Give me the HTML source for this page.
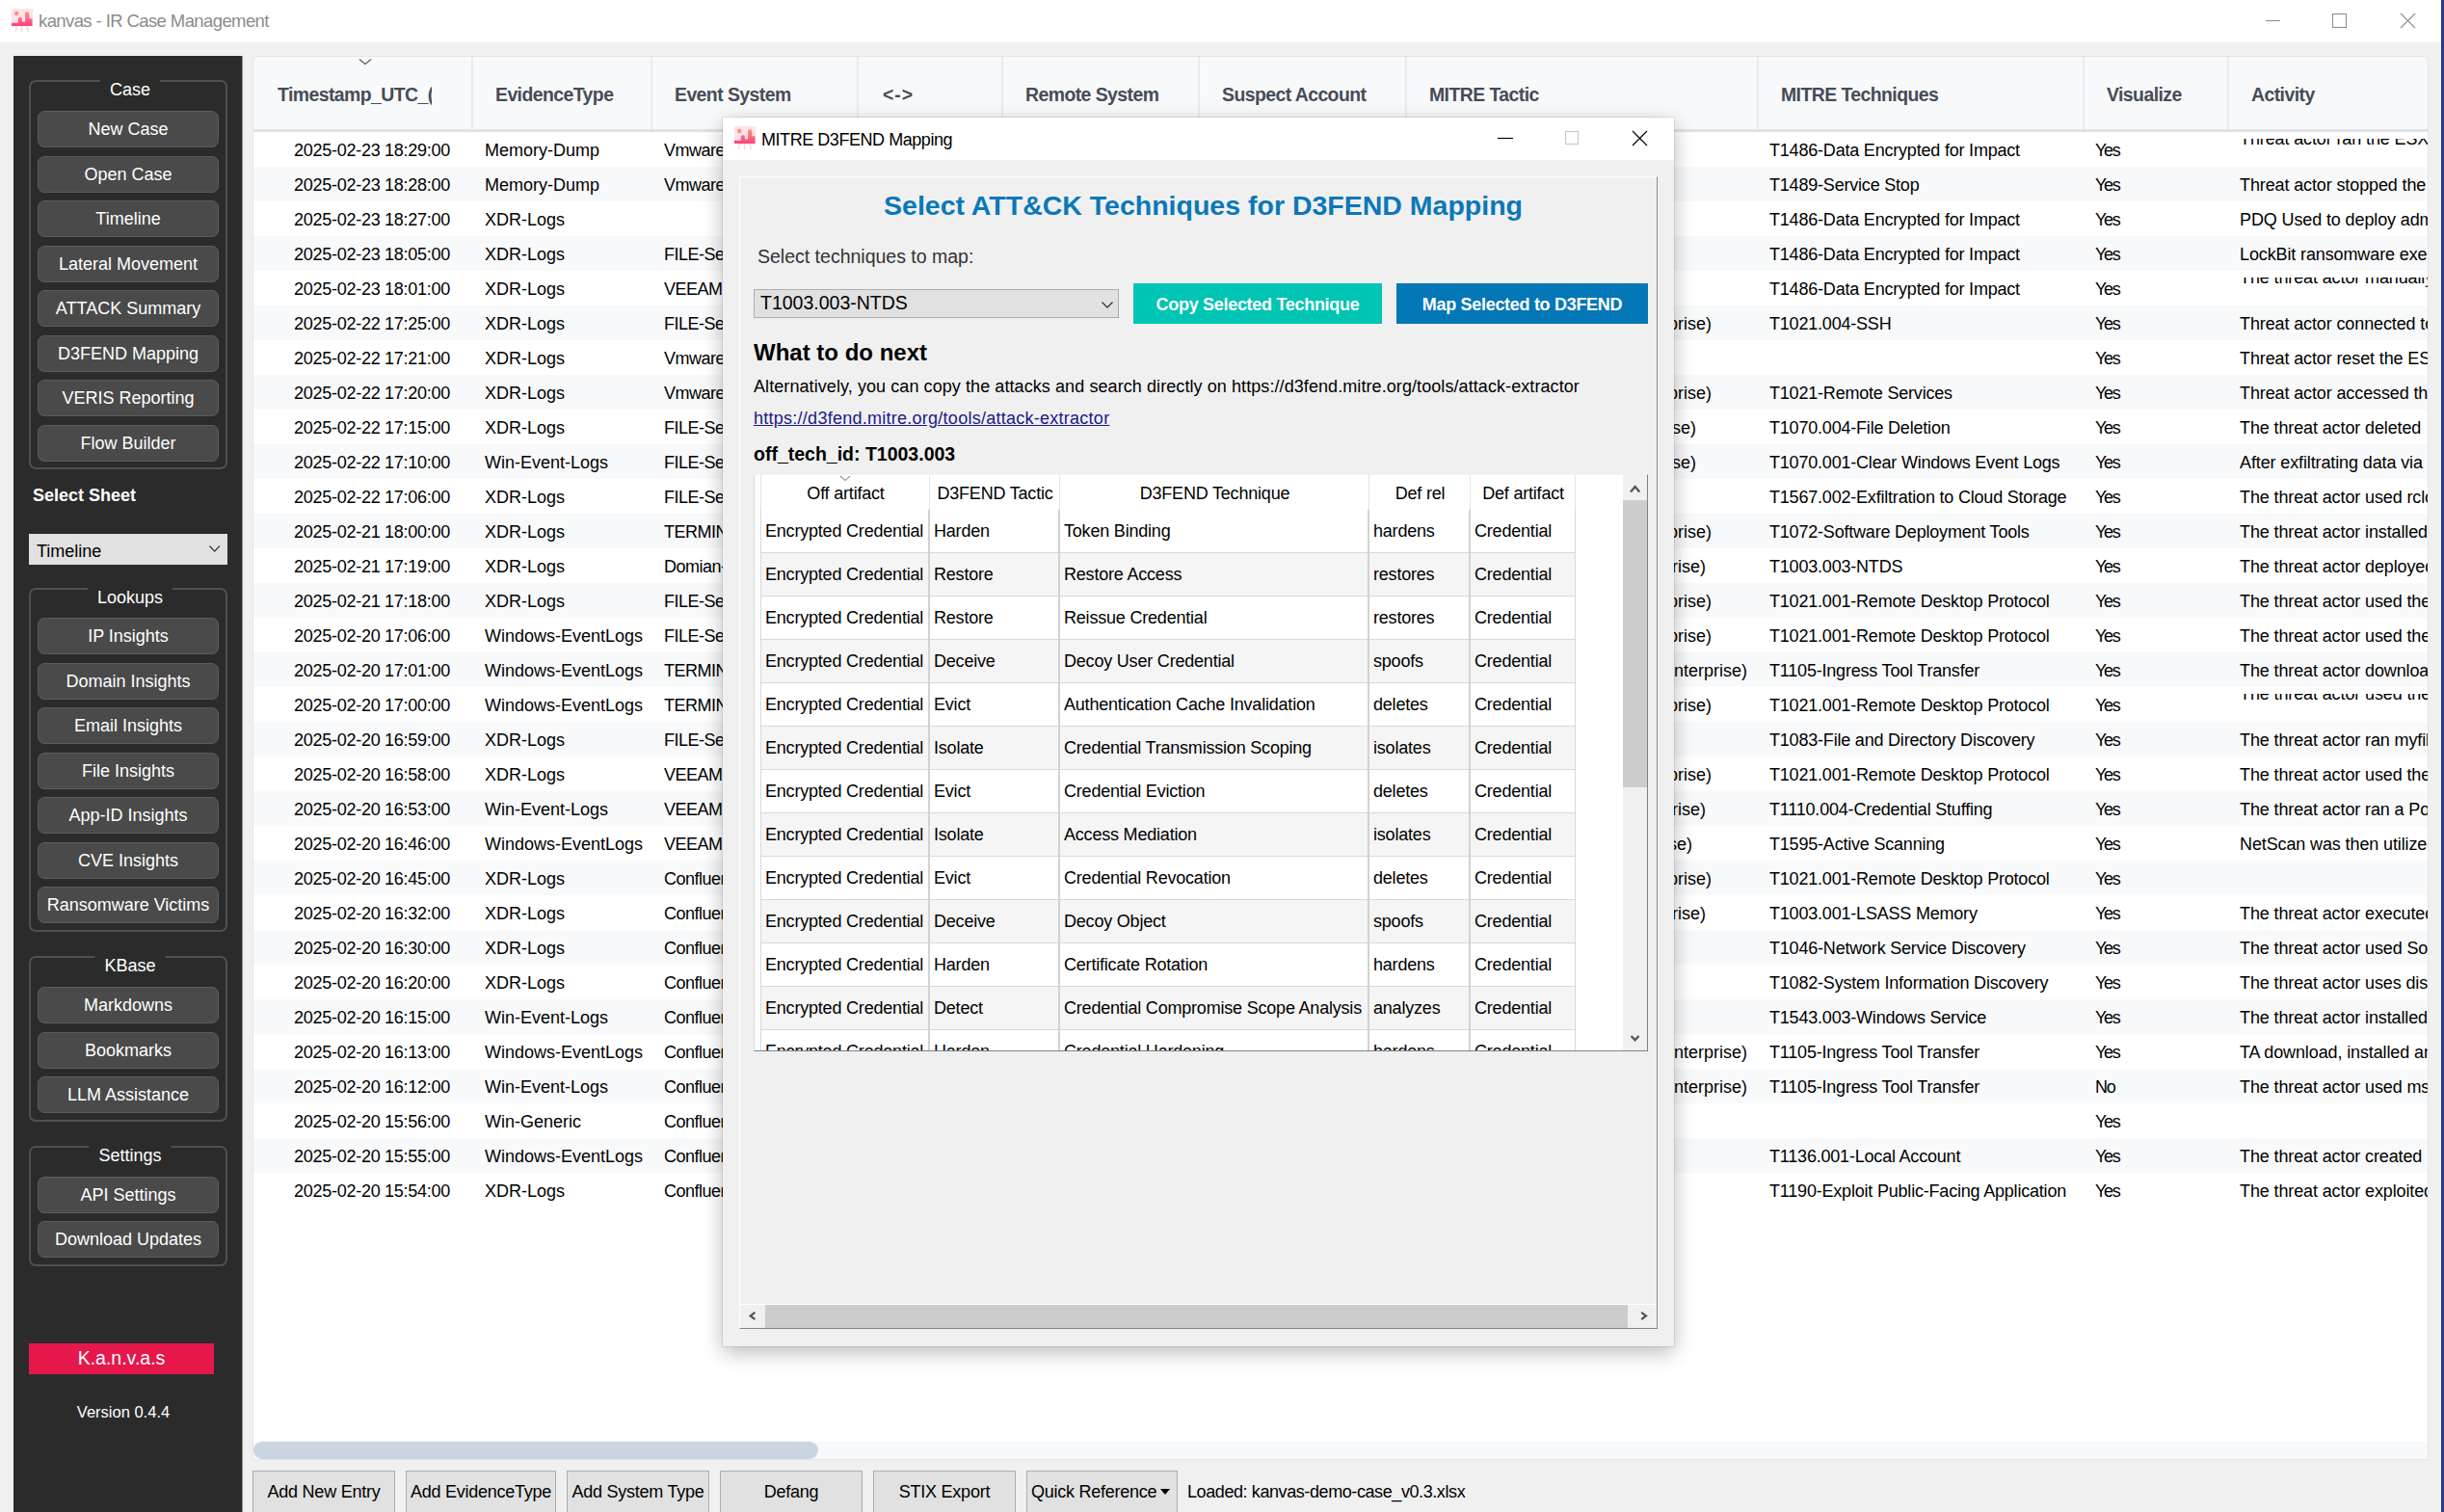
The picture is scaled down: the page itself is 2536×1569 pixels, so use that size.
<!DOCTYPE html><html><head><meta charset="utf-8"><title>kanvas - IR Case Management</title><style>

*{box-sizing:border-box;margin:0;padding:0}
html,body{width:2536px;height:1569px;overflow:hidden;background:#f0f0f0}
body{position:relative;font-family:"Liberation Sans",sans-serif;color:#000}
.abs,.ico{position:absolute}
.t{position:absolute;white-space:nowrap;line-height:1}
#titlebar{left:0;top:0;width:2533px;height:44px;background:#fff}
#ttl{left:40px;top:13.4px;font-size:18.5px;color:#8c8c8c;letter-spacing:-0.6px}
#edge{left:2533px;top:0;width:3px;height:1569px;background:#2b3990}
#side{left:14px;top:58px;width:238px;height:1511px;background:#2b2b2b;box-shadow:inset -1px 0 0 #8b8b8b}
.grp{position:absolute;left:16px;width:206px;border:2px solid #505050;border-radius:7px}
.gt{position:absolute;left:50%;transform:translateX(-50%);margin-left:2px;top:-2px;background:#2b2b2b;color:#fff;font-size:18px;line-height:20px;height:12px;padding:0 10px;white-space:nowrap}
.sb{position:absolute;left:25px;width:188px;height:38px;background:#4a4a4a;border:1px solid #5c5c5c;border-radius:7px;color:#fff;font-size:18px;line-height:37.5px;text-align:center;white-space:nowrap}
#tbl{left:263px;top:59px;width:2256px;height:1455px;background:#fff;border-radius:6px 6px 0 0;overflow:hidden;box-shadow:0 0 0 1px #e2e6eb}
#thead{left:0;top:0;width:2256px;height:78px;background:#f8f9fa;border-bottom:3px solid #dee2e6}
.vs{position:absolute;top:0;width:2px;height:75px;background:#e9ecef}
.th{position:absolute;top:28px;font-size:19.4px;font-weight:bold;color:#454c58;white-space:nowrap;line-height:22px;letter-spacing:-0.55px}
.r{position:absolute;left:0;width:2256px;height:36px}
.r.o{background:#f8f9fa}
.c{position:absolute;top:0;height:36px;line-height:38px;font-size:18px;white-space:nowrap;color:#000}
.c.ts{left:42px;letter-spacing:-0.27px}
.c.ev{left:240px}
.c.es{left:426px;letter-spacing:-0.5px}
.c.mt{left:1195px;display:flex;justify-content:flex-end;overflow:visible}
.c.te{left:1573px;letter-spacing:-0.2px}
.c.vz{left:1911px;letter-spacing:-1.3px}
.c.ac{left:2061px;width:195px;overflow:hidden;letter-spacing:-0.12px}
.c.ac2{left:2061px;width:195px;overflow:hidden;top:6.5px;height:29.5px;letter-spacing:-0.12px}
.c.ac2 span{position:absolute;left:0;top:-17.5px;line-height:36px}
.bb{position:absolute;top:1526px;height:50px;background:#e1e1e1;border:1px solid #adadad;letter-spacing:-0.25px;font-size:18px;text-align:center;line-height:42px;white-space:nowrap}
#dlg{left:750px;top:122px;width:987px;height:1275px;background:#f0f0f0;box-shadow:0 0 0 1px rgba(0,0,0,.07),0 6px 20px rgba(0,0,0,.28)}
#dtb{left:0;top:0;width:987px;height:44px;background:#fff}
#frame{left:17px;top:61px;width:953px;height:1196px;border:1px solid;border-color:#fff #868c96 #7c8490 #fff}
.dt{position:absolute;font-size:18px;letter-spacing:-0.2px;line-height:45px;white-space:nowrap;height:45px;top:0}
.dr{position:absolute;left:7px;width:845px;height:45px;border-bottom:1px solid #d9d9d9}
.dr.o{background:#f5f5f5}
.dv{position:absolute;top:0;width:2px;background:#d4d4d4}

</style></head><body>
<div class="abs" id="titlebar"></div>
<svg class="ico" style="left:12px;top:9px" width="22" height="24" viewBox="0 0 22 24"><defs><linearGradient id="g1" x1="0" y1="0" x2="0" y2="1"><stop offset="0" stop-color="#ff8f7c"/><stop offset="0.55" stop-color="#ff6585"/><stop offset="1" stop-color="#ff3d80"/></linearGradient></defs><rect x="0" y="0" width="22" height="18" fill="#ffe2e7"/><path d="M0 18.100V14.700H6.700V11a2.100 2.100 0 0 1 4.200 0V13.400H14.100V5.300a2.100 2.100 0 0 1 4.200 0V10.200H21.500V18.100z" fill="url(#g1)"/><circle cx="5.200" cy="5" r="2.200" fill="#ff8c7c"/><path d="M5.600 18.100L4.200 24M10.600 18.100V24M15.600 18.100L17.800 24" stroke="#ffd3dc" stroke-width="1.500" fill="none"/></svg>
<div class="t" id="ttl">kanvas - IR Case Management</div>
<svg class="abs" style="left:2340px;top:0" width="192" height="44" viewBox="0 0 192 44"><g stroke="#8e8e8e" stroke-width="1.1" fill="none"><path d="M11 21.5h15"/><rect x="80.5" y="14.5" width="14" height="14"/><path d="M151 14l15 15M166 14l-15 15"/></g></svg>
<div class="abs" id="edge"></div>
<div class="abs" id="side">
<div class="grp" style="top:25px;height:404px"><div class="gt">Case</div></div>
<div class="sb" style="top:57.0px">New Case</div>
<div class="sb" style="top:103.5px">Open Case</div>
<div class="sb" style="top:150.0px">Timeline</div>
<div class="sb" style="top:196.5px">Lateral Movement</div>
<div class="sb" style="top:243.0px">ATTACK Summary</div>
<div class="sb" style="top:289.5px">D3FEND Mapping</div>
<div class="sb" style="top:336.0px">VERIS Reporting</div>
<div class="sb" style="top:382.5px">Flow Builder</div>
<div class="t" style="left:20px;top:447px;font-size:18px;font-weight:bold;color:#fff">Select Sheet</div>
<div class="abs" style="left:16px;top:496px;width:206px;height:32px;background:#e1e1e1;border:1px solid #e1e1e1"><div class="t" style="left:7px;top:7.5px;font-size:18px">Timeline</div><svg class="abs" style="left:184.500px;top:10.300px" width="14" height="10" viewBox="0 0 14 10"><path d="M1.5 1.5l5.200 5.600 5.200-5.600" stroke="#333" stroke-width="1.2" fill="none"/></svg></div>
<div class="grp" style="top:552px;height:357px"><div class="gt">Lookups</div></div>
<div class="sb" style="top:583.0px">IP Insights</div>
<div class="sb" style="top:629.5px">Domain Insights</div>
<div class="sb" style="top:676.0px">Email Insights</div>
<div class="sb" style="top:722.5px">File Insights</div>
<div class="sb" style="top:769.0px">App-ID Insights</div>
<div class="sb" style="top:815.5px">CVE Insights</div>
<div class="sb" style="top:862.0px">Ransomware Victims</div>
<div class="grp" style="top:934px;height:172px"><div class="gt">KBase</div></div>
<div class="sb" style="top:966.0px">Markdowns</div>
<div class="sb" style="top:1012.5px">Bookmarks</div>
<div class="sb" style="top:1059.0px">LLM Assistance</div>
<div class="grp" style="top:1131px;height:125px"><div class="gt">Settings</div></div>
<div class="sb" style="top:1162.5px">API Settings</div>
<div class="sb" style="top:1209.0px">Download Updates</div>
<div class="abs" style="left:16px;top:1336px;width:192px;height:32px;background:#e6174b;color:#fff;font-size:19.5px;line-height:30px;text-align:center">K.a.n.v.a.s</div>
<div class="t" style="left:0;width:228px;text-align:center;top:1399px;font-size:16.5px;color:#fff">Version 0.4.4</div>
</div>
<div class="abs" id="tbl">
<div class="abs" id="thead">
<div class="th" style="left:25px;width:160px;overflow:hidden">Timestamp_UTC_(</div>
<div class="vs" style="left:226px"></div>
<div class="th" style="left:251px">EvidenceType</div>
<div class="vs" style="left:412px"></div>
<div class="th" style="left:437px">Event System</div>
<div class="vs" style="left:626px"></div>
<div class="th" style="left:651px;letter-spacing:1px;margin-left:2px">&lt;-&gt;</div>
<div class="vs" style="left:776px"></div>
<div class="th" style="left:801px">Remote System</div>
<div class="vs" style="left:980px"></div>
<div class="th" style="left:1005px">Suspect Account</div>
<div class="vs" style="left:1195px"></div>
<div class="th" style="left:1220px">MITRE Tactic</div>
<div class="vs" style="left:1560px"></div>
<div class="th" style="left:1585px">MITRE Techniques</div>
<div class="vs" style="left:1898px"></div>
<div class="th" style="left:1923px">Visualize</div>
<div class="vs" style="left:2048px"></div>
<div class="th" style="left:2073px">Activity</div>
<svg class="abs" style="left:108px;top:1px" width="16" height="9" viewBox="0 0 16 9"><path d="M2 1.5l6 5 6-5" stroke="#555" stroke-width="1.1" fill="none"/></svg>
</div>
<div class="r" style="top:78px">
<div class="c ts">2025-02-23 18:29:00</div><div class="c ev">Memory-Dump</div>
<div class="c es">Vmware-ESXi</div>
<div class="c te">T1486-Data Encrypted for Impact</div>
<div class="c vz">Yes</div>
<div class="c ac2"><span>Threat actor ran the ESXi encryptor</span></div>
</div>
<div class="r o" style="top:114px">
<div class="c ts">2025-02-23 18:28:00</div><div class="c ev">Memory-Dump</div>
<div class="c es">Vmware-ESXi</div>
<div class="c te">T1489-Service Stop</div>
<div class="c vz">Yes</div>
<div class="c ac">Threat actor stopped the</div>
</div>
<div class="r" style="top:150px">
<div class="c ts">2025-02-23 18:27:00</div><div class="c ev">XDR-Logs</div>
<div class="c te">T1486-Data Encrypted for Impact</div>
<div class="c vz">Yes</div>
<div class="c ac">PDQ Used to deploy admin tools</div>
</div>
<div class="r o" style="top:186px">
<div class="c ts">2025-02-23 18:05:00</div><div class="c ev">XDR-Logs</div>
<div class="c es">FILE-Server</div>
<div class="c te">T1486-Data Encrypted for Impact</div>
<div class="c vz">Yes</div>
<div class="c ac">LockBit ransomware executed</div>
</div>
<div class="r" style="top:222px">
<div class="c ts">2025-02-23 18:01:00</div><div class="c ev">XDR-Logs</div>
<div class="c es">VEEAM-Server</div>
<div class="c te">T1486-Data Encrypted for Impact</div>
<div class="c vz">Yes</div>
<div class="c ac2"><span>The threat actor manually executed</span></div>
</div>
<div class="r o" style="top:258px">
<div class="c ts">2025-02-22 17:25:00</div><div class="c ev">XDR-Logs</div>
<div class="c es">FILE-Server</div>
<div class="c mt" style="width:318px"><span>Lateral Movement (Enterprise)</span></div>
<div class="c te">T1021.004-SSH</div>
<div class="c vz">Yes</div>
<div class="c ac">Threat actor connected to ESXi</div>
</div>
<div class="r" style="top:294px">
<div class="c ts">2025-02-22 17:21:00</div><div class="c ev">XDR-Logs</div>
<div class="c es">Vmware-ESXi</div>
<div class="c vz">Yes</div>
<div class="c ac">Threat actor reset the ESXi root password</div>
</div>
<div class="r o" style="top:330px">
<div class="c ts">2025-02-22 17:20:00</div><div class="c ev">XDR-Logs</div>
<div class="c es">Vmware-ESXi</div>
<div class="c mt" style="width:318px"><span>Lateral Movement (Enterprise)</span></div>
<div class="c te">T1021-Remote Services</div>
<div class="c vz">Yes</div>
<div class="c ac">Threat actor accessed the ESXi</div>
</div>
<div class="r" style="top:366px">
<div class="c ts">2025-02-22 17:15:00</div><div class="c ev">XDR-Logs</div>
<div class="c es">FILE-Server</div>
<div class="c mt" style="width:302px"><span>Defense Evasion (Enterprise)</span></div>
<div class="c te">T1070.004-File Deletion</div>
<div class="c vz">Yes</div>
<div class="c ac">The threat actor deleted</div>
</div>
<div class="r o" style="top:402px">
<div class="c ts">2025-02-22 17:10:00</div><div class="c ev">Win-Event-Logs</div>
<div class="c es">FILE-Server</div>
<div class="c mt" style="width:302px"><span>Defense Evasion (Enterprise)</span></div>
<div class="c te">T1070.001-Clear Windows Event Logs</div>
<div class="c vz">Yes</div>
<div class="c ac">After exfiltrating data via</div>
</div>
<div class="r" style="top:438px">
<div class="c ts">2025-02-22 17:06:00</div><div class="c ev">XDR-Logs</div>
<div class="c es">FILE-Server</div>
<div class="c te">T1567.002-Exfiltration to Cloud Storage</div>
<div class="c vz">Yes</div>
<div class="c ac">The threat actor used rclone</div>
</div>
<div class="r o" style="top:474px">
<div class="c ts">2025-02-21 18:00:00</div><div class="c ev">XDR-Logs</div>
<div class="c es">TERMINAL-Server</div>
<div class="c mt" style="width:318px"><span>Lateral Movement (Enterprise)</span></div>
<div class="c te">T1072-Software Deployment Tools</div>
<div class="c vz">Yes</div>
<div class="c ac">The threat actor installed PDQ</div>
</div>
<div class="r" style="top:510px">
<div class="c ts">2025-02-21 17:19:00</div><div class="c ev">XDR-Logs</div>
<div class="c es">Domian-Controller</div>
<div class="c mt" style="width:312px"><span>Credential Access (Enterprise)</span></div>
<div class="c te">T1003.003-NTDS</div>
<div class="c vz">Yes</div>
<div class="c ac">The threat actor deployed ntdsutil</div>
</div>
<div class="r o" style="top:546px">
<div class="c ts">2025-02-21 17:18:00</div><div class="c ev">XDR-Logs</div>
<div class="c es">FILE-Server</div>
<div class="c mt" style="width:318px"><span>Lateral Movement (Enterprise)</span></div>
<div class="c te">T1021.001-Remote Desktop Protocol</div>
<div class="c vz">Yes</div>
<div class="c ac">The threat actor used the RDP</div>
</div>
<div class="r" style="top:582px">
<div class="c ts">2025-02-20 17:06:00</div><div class="c ev">Windows-EventLogs</div>
<div class="c es">FILE-Server</div>
<div class="c mt" style="width:318px"><span>Lateral Movement (Enterprise)</span></div>
<div class="c te">T1021.001-Remote Desktop Protocol</div>
<div class="c vz">Yes</div>
<div class="c ac">The threat actor used the RDP</div>
</div>
<div class="r o" style="top:618px">
<div class="c ts">2025-02-20 17:01:00</div><div class="c ev">Windows-EventLogs</div>
<div class="c es">TERMINAL-Server</div>
<div class="c mt" style="width:355px"><span>Command and Control (Enterprise)</span></div>
<div class="c te">T1105-Ingress Tool Transfer</div>
<div class="c vz">Yes</div>
<div class="c ac">The threat actor downloaded tools</div>
</div>
<div class="r" style="top:654px">
<div class="c ts">2025-02-20 17:00:00</div><div class="c ev">Windows-EventLogs</div>
<div class="c es">TERMINAL-Server</div>
<div class="c mt" style="width:318px"><span>Lateral Movement (Enterprise)</span></div>
<div class="c te">T1021.001-Remote Desktop Protocol</div>
<div class="c vz">Yes</div>
<div class="c ac2"><span>The threat actor used the RDP</span></div>
</div>
<div class="r o" style="top:690px">
<div class="c ts">2025-02-20 16:59:00</div><div class="c ev">XDR-Logs</div>
<div class="c es">FILE-Server</div>
<div class="c te">T1083-File and Directory Discovery</div>
<div class="c vz">Yes</div>
<div class="c ac">The threat actor ran myfiles</div>
</div>
<div class="r" style="top:726px">
<div class="c ts">2025-02-20 16:58:00</div><div class="c ev">XDR-Logs</div>
<div class="c es">VEEAM-Server</div>
<div class="c mt" style="width:318px"><span>Lateral Movement (Enterprise)</span></div>
<div class="c te">T1021.001-Remote Desktop Protocol</div>
<div class="c vz">Yes</div>
<div class="c ac">The threat actor used the RDP</div>
</div>
<div class="r o" style="top:762px">
<div class="c ts">2025-02-20 16:53:00</div><div class="c ev">Win-Event-Logs</div>
<div class="c es">VEEAM-Server</div>
<div class="c mt" style="width:312px"><span>Credential Access (Enterprise)</span></div>
<div class="c te">T1110.004-Credential Stuffing</div>
<div class="c vz">Yes</div>
<div class="c ac">The threat actor ran a PowerShell</div>
</div>
<div class="r" style="top:798px">
<div class="c ts">2025-02-20 16:46:00</div><div class="c ev">Windows-EventLogs</div>
<div class="c es">VEEAM-Server</div>
<div class="c mt" style="width:298px"><span>Reconnaissance (Enterprise)</span></div>
<div class="c te">T1595-Active Scanning</div>
<div class="c vz">Yes</div>
<div class="c ac">NetScan was then utilized</div>
</div>
<div class="r o" style="top:834px">
<div class="c ts">2025-02-20 16:45:00</div><div class="c ev">XDR-Logs</div>
<div class="c es">Confluence-Server</div>
<div class="c mt" style="width:318px"><span>Lateral Movement (Enterprise)</span></div>
<div class="c te">T1021.001-Remote Desktop Protocol</div>
<div class="c vz">Yes</div>
</div>
<div class="r" style="top:870px">
<div class="c ts">2025-02-20 16:32:00</div><div class="c ev">XDR-Logs</div>
<div class="c es">Confluence-Server</div>
<div class="c mt" style="width:312px"><span>Credential Access (Enterprise)</span></div>
<div class="c te">T1003.001-LSASS Memory</div>
<div class="c vz">Yes</div>
<div class="c ac">The threat actor executed Mimikatz</div>
</div>
<div class="r o" style="top:906px">
<div class="c ts">2025-02-20 16:30:00</div><div class="c ev">XDR-Logs</div>
<div class="c es">Confluence-Server</div>
<div class="c te">T1046-Network Service Discovery</div>
<div class="c vz">Yes</div>
<div class="c ac">The threat actor used SoftPerfect</div>
</div>
<div class="r" style="top:942px">
<div class="c ts">2025-02-20 16:20:00</div><div class="c ev">XDR-Logs</div>
<div class="c es">Confluence-Server</div>
<div class="c te">T1082-System Information Discovery</div>
<div class="c vz">Yes</div>
<div class="c ac">The threat actor uses discovery</div>
</div>
<div class="r o" style="top:978px">
<div class="c ts">2025-02-20 16:15:00</div><div class="c ev">Win-Event-Logs</div>
<div class="c es">Confluence-Server</div>
<div class="c te">T1543.003-Windows Service</div>
<div class="c vz">Yes</div>
<div class="c ac">The threat actor installed AnyDesk</div>
</div>
<div class="r" style="top:1014px">
<div class="c ts">2025-02-20 16:13:00</div><div class="c ev">Windows-EventLogs</div>
<div class="c es">Confluence-Server</div>
<div class="c mt" style="width:355px"><span>Command and Control (Enterprise)</span></div>
<div class="c te">T1105-Ingress Tool Transfer</div>
<div class="c vz">Yes</div>
<div class="c ac">TA download,  installed anydesk</div>
</div>
<div class="r o" style="top:1050px">
<div class="c ts">2025-02-20 16:12:00</div><div class="c ev">Win-Event-Logs</div>
<div class="c es">Confluence-Server</div>
<div class="c mt" style="width:355px"><span>Command and Control (Enterprise)</span></div>
<div class="c te">T1105-Ingress Tool Transfer</div>
<div class="c vz">No</div>
<div class="c ac">The threat actor used msiexec</div>
</div>
<div class="r" style="top:1086px">
<div class="c ts">2025-02-20 15:56:00</div><div class="c ev">Win-Generic</div>
<div class="c es">Confluence-Server</div>
<div class="c vz">Yes</div>
</div>
<div class="r o" style="top:1122px">
<div class="c ts">2025-02-20 15:55:00</div><div class="c ev">Windows-EventLogs</div>
<div class="c es">Confluence-Server</div>
<div class="c te">T1136.001-Local Account</div>
<div class="c vz">Yes</div>
<div class="c ac">The threat actor created</div>
</div>
<div class="r" style="top:1158px">
<div class="c ts">2025-02-20 15:54:00</div><div class="c ev">XDR-Logs</div>
<div class="c es">Confluence-Server</div>
<div class="c te">T1190-Exploit Public-Facing Application</div>
<div class="c vz">Yes</div>
<div class="c ac">The threat actor exploited Confluence</div>
</div>
<div class="abs" style="left:0;top:1437px;width:2256px;height:18px;background:#f8f9fa"></div>
<div class="abs" style="left:0;top:1437px;width:586px;height:18px;background:#cbd5e0;border-radius:9px"></div>
</div>
<div class="bb" style="left:262px;width:148px">Add New Entry</div>
<div class="bb" style="left:421px;width:156px">Add EvidenceType</div>
<div class="bb" style="left:588px;width:148px">Add System Type</div>
<div class="bb" style="left:747px;width:148px">Defang</div>
<div class="bb" style="left:906px;width:148px">STIX Export</div>
<div class="bb" style="left:1065px;width:157px;text-align:left;padding-left:4px">Quick Reference<svg style="position:absolute;left:138px;top:18px" width="10" height="6" viewBox="0 0 10 6"><path d="M0 0h10l-5 6z" fill="#000"/></svg></div>
<div class="t" style="left:1232px;top:1538.500px;font-size:18px;letter-spacing:-0.41px">Loaded: kanvas-demo-case_v0.3.xlsx</div>
<div class="abs" id="dlg">
<div class="abs" id="dtb"></div>
<svg class="ico" style="left:12px;top:9px" width="22" height="24" viewBox="0 0 22 24"><defs><linearGradient id="g2" x1="0" y1="0" x2="0" y2="1"><stop offset="0" stop-color="#ff8f7c"/><stop offset="0.55" stop-color="#ff6585"/><stop offset="1" stop-color="#ff3d80"/></linearGradient></defs><rect x="0" y="0" width="22" height="18" fill="#ffe2e7"/><path d="M0 18.100V14.700H6.700V11a2.100 2.100 0 0 1 4.200 0V13.400H14.100V5.300a2.100 2.100 0 0 1 4.200 0V10.200H21.500V18.100z" fill="url(#g2)"/><circle cx="5.200" cy="5" r="2.200" fill="#ff8c7c"/><path d="M5.600 18.100L4.200 24M10.600 18.100V24M15.600 18.100L17.800 24" stroke="#ffd3dc" stroke-width="1.500" fill="none"/></svg>
<div class="t" style="left:40px;top:14px;font-size:18px;letter-spacing:-0.45px">MITRE D3FEND Mapping</div>
<svg class="abs" style="left:790px;top:-1px" width="198" height="44" viewBox="0 0 198 44"><g stroke-width="1.15" fill="none"><path d="M14 22.5h16" stroke="#000"/><rect x="84.500" y="15.500" width="13" height="13" stroke="#c8c8c8"/><path d="M154 15l15 15M169 15l-15 15" stroke="#000"/></g></svg>
<div class="abs" id="frame"></div>
<div class="t" style="left:22px;width:953px;text-align:center;top:77px;font-size:28.5px;font-weight:bold;color:#0a78b8">Select ATT&amp;CK Techniques for D3FEND Mapping</div>
<div class="t" style="left:36px;top:135px;font-size:19.5px;color:#333">Select techniques to map:</div>
<div class="abs" style="left:32px;top:178px;width:379px;height:30px;background:#e1e1e1;border:1px solid #adadad"><div class="t" style="left:6px;top:4px;font-size:19.5px">T1003.003-NTDS</div><svg class="abs" style="left:358.500px;top:10.500px" width="14" height="9" viewBox="0 0 14 9"><path d="M1.5 1.5l5.5 5.5 5.5-5.5" stroke="#333" stroke-width="1.3" fill="none"/></svg></div>
<div class="abs" style="left:426px;top:172px;width:258px;height:42px;background:#00c4b4;color:#fff;font-weight:bold;font-size:18px;line-height:44.5px;text-align:center;letter-spacing:-0.3px">Copy Selected Technique</div>
<div class="abs" style="left:699px;top:172px;width:261px;height:42px;background:#0477b6;color:#fff;font-weight:bold;font-size:18px;line-height:44.5px;text-align:center;letter-spacing:-0.3px">Map Selected to D3FEND</div>
<div class="t" style="left:32px;top:232px;font-size:24px;font-weight:bold">What to do next</div>
<div class="t" style="left:32px;top:270px;font-size:18px;letter-spacing:0.08px">Alternatively, you can copy the attacks and search directly on https://d3fend.mitre.org/tools/attack-extractor</div>
<div class="t" style="left:32px;top:303px;font-size:18px;color:#1a1a86;letter-spacing:0.26px;text-decoration:underline">https://d3fend.mitre.org/tools/attack-extractor</div>
<div class="t" style="left:32px;top:340px;font-size:19.5px;font-weight:bold">off_tech_id: T1003.003</div>
<div class="abs" style="left:32px;top:370px;width:928px;height:599px;background:#fff;border:1px solid;border-color:#f4f4f4 #7a828c #7a828c #dadada;overflow:hidden">
<div class="dt" style="left:7px;width:175px;text-align:center;top:-3px">Off artifact</div>
<div class="dt" style="left:182px;width:135px;text-align:center;top:-3px">D3FEND Tactic</div>
<div class="dt" style="left:317px;width:321px;text-align:center;top:-3px">D3FEND Technique</div>
<div class="dt" style="left:638px;width:105px;text-align:center;top:-3px">Def rel</div>
<div class="dt" style="left:743px;width:109px;text-align:center;top:-3px">Def artifact</div>
<svg class="abs" style="left:88px;top:0px" width="12" height="7" viewBox="0 0 12 7"><path d="M1 1l5 4.500 5-4.500" stroke="#666" stroke-width="1" fill="none"/></svg>
<div class="dr" style="top:36px">
<div class="dt" style="left:4px">Encrypted Credential</div>
<div class="dt" style="left:179px">Harden</div>
<div class="dt" style="left:314px">Token Binding</div>
<div class="dt" style="left:635px">hardens</div>
<div class="dt" style="left:740px">Credential</div>
</div>
<div class="dr o" style="top:81px">
<div class="dt" style="left:4px">Encrypted Credential</div>
<div class="dt" style="left:179px">Restore</div>
<div class="dt" style="left:314px">Restore Access</div>
<div class="dt" style="left:635px">restores</div>
<div class="dt" style="left:740px">Credential</div>
</div>
<div class="dr" style="top:126px">
<div class="dt" style="left:4px">Encrypted Credential</div>
<div class="dt" style="left:179px">Restore</div>
<div class="dt" style="left:314px">Reissue Credential</div>
<div class="dt" style="left:635px">restores</div>
<div class="dt" style="left:740px">Credential</div>
</div>
<div class="dr o" style="top:171px">
<div class="dt" style="left:4px">Encrypted Credential</div>
<div class="dt" style="left:179px">Deceive</div>
<div class="dt" style="left:314px">Decoy User Credential</div>
<div class="dt" style="left:635px">spoofs</div>
<div class="dt" style="left:740px">Credential</div>
</div>
<div class="dr" style="top:216px">
<div class="dt" style="left:4px">Encrypted Credential</div>
<div class="dt" style="left:179px">Evict</div>
<div class="dt" style="left:314px">Authentication Cache Invalidation</div>
<div class="dt" style="left:635px">deletes</div>
<div class="dt" style="left:740px">Credential</div>
</div>
<div class="dr o" style="top:261px">
<div class="dt" style="left:4px">Encrypted Credential</div>
<div class="dt" style="left:179px">Isolate</div>
<div class="dt" style="left:314px">Credential Transmission Scoping</div>
<div class="dt" style="left:635px">isolates</div>
<div class="dt" style="left:740px">Credential</div>
</div>
<div class="dr" style="top:306px">
<div class="dt" style="left:4px">Encrypted Credential</div>
<div class="dt" style="left:179px">Evict</div>
<div class="dt" style="left:314px">Credential Eviction</div>
<div class="dt" style="left:635px">deletes</div>
<div class="dt" style="left:740px">Credential</div>
</div>
<div class="dr o" style="top:351px">
<div class="dt" style="left:4px">Encrypted Credential</div>
<div class="dt" style="left:179px">Isolate</div>
<div class="dt" style="left:314px">Access Mediation</div>
<div class="dt" style="left:635px">isolates</div>
<div class="dt" style="left:740px">Credential</div>
</div>
<div class="dr" style="top:396px">
<div class="dt" style="left:4px">Encrypted Credential</div>
<div class="dt" style="left:179px">Evict</div>
<div class="dt" style="left:314px">Credential Revocation</div>
<div class="dt" style="left:635px">deletes</div>
<div class="dt" style="left:740px">Credential</div>
</div>
<div class="dr o" style="top:441px">
<div class="dt" style="left:4px">Encrypted Credential</div>
<div class="dt" style="left:179px">Deceive</div>
<div class="dt" style="left:314px">Decoy Object</div>
<div class="dt" style="left:635px">spoofs</div>
<div class="dt" style="left:740px">Credential</div>
</div>
<div class="dr" style="top:486px">
<div class="dt" style="left:4px">Encrypted Credential</div>
<div class="dt" style="left:179px">Harden</div>
<div class="dt" style="left:314px">Certificate Rotation</div>
<div class="dt" style="left:635px">hardens</div>
<div class="dt" style="left:740px">Credential</div>
</div>
<div class="dr o" style="top:531px">
<div class="dt" style="left:4px">Encrypted Credential</div>
<div class="dt" style="left:179px">Detect</div>
<div class="dt" style="left:314px">Credential Compromise Scope Analysis</div>
<div class="dt" style="left:635px">analyzes</div>
<div class="dt" style="left:740px">Credential</div>
</div>
<div class="dr" style="top:576px">
<div class="dt" style="left:4px">Encrypted Credential</div>
<div class="dt" style="left:179px">Harden</div>
<div class="dt" style="left:314px">Credential Hardening</div>
<div class="dt" style="left:635px">hardens</div>
<div class="dt" style="left:740px">Credential</div>
</div>
<div class="dv" style="left:6px;top:0;width:1px;height:36px;background:#e4e4e4"></div>
<div class="dv" style="left:6px;top:36px;width:1px;height:600px;background:#d8d8d8"></div>
<div class="dv" style="left:181px;top:0;width:1px;height:36px;background:#e4e4e4"></div>
<div class="dv" style="left:180px;top:36px;height:600px;background:#d2d2d2"></div>
<div class="dv" style="left:316px;top:0;width:1px;height:36px;background:#e4e4e4"></div>
<div class="dv" style="left:315px;top:36px;height:600px;background:#d2d2d2"></div>
<div class="dv" style="left:637px;top:0;width:1px;height:36px;background:#e4e4e4"></div>
<div class="dv" style="left:636px;top:36px;height:600px;background:#d2d2d2"></div>
<div class="dv" style="left:742px;top:0;width:1px;height:36px;background:#e4e4e4"></div>
<div class="dv" style="left:741px;top:36px;height:600px;background:#d2d2d2"></div>
<div class="dv" style="left:851px;top:0;width:1px;height:36px;background:#e4e4e4"></div>
<div class="dv" style="left:851px;top:36px;width:1px;height:600px;background:#d8d8d8"></div>
<div class="abs" style="left:901px;top:0;width:25px;height:597px;background:#f0f0f0"></div>
<div class="abs" style="left:901px;top:26px;width:25px;height:298px;background:#cdcdcd"></div>
</div>
<div class="abs" style="left:18px;top:1231px;width:951px;height:1px;background:#fff"></div><div class="abs" style="left:18px;top:1232px;width:951px;height:24px;background:#f0f0f0"></div>
<div class="abs" style="left:44px;top:1232px;width:895px;height:24px;background:#cdcdcd"></div>
<svg class="abs" style="left:0;top:0;pointer-events:none" width="987" height="1275" viewBox="0 0 987 1275"><g stroke="#555" stroke-width="2.3" fill="none"><polyline points="942.00,388.60 946.65,383.00 951.30,388.60"/><polyline points="942.60,952.90 946.55,957.30 950.50,952.90"/><polyline points="33.40,1239.80 28.70,1243.45 33.40,1247.10"/><polyline points="953.20,1239.80 957.90,1243.45 953.20,1247.10"/></g></svg>
</div>
</body></html>
